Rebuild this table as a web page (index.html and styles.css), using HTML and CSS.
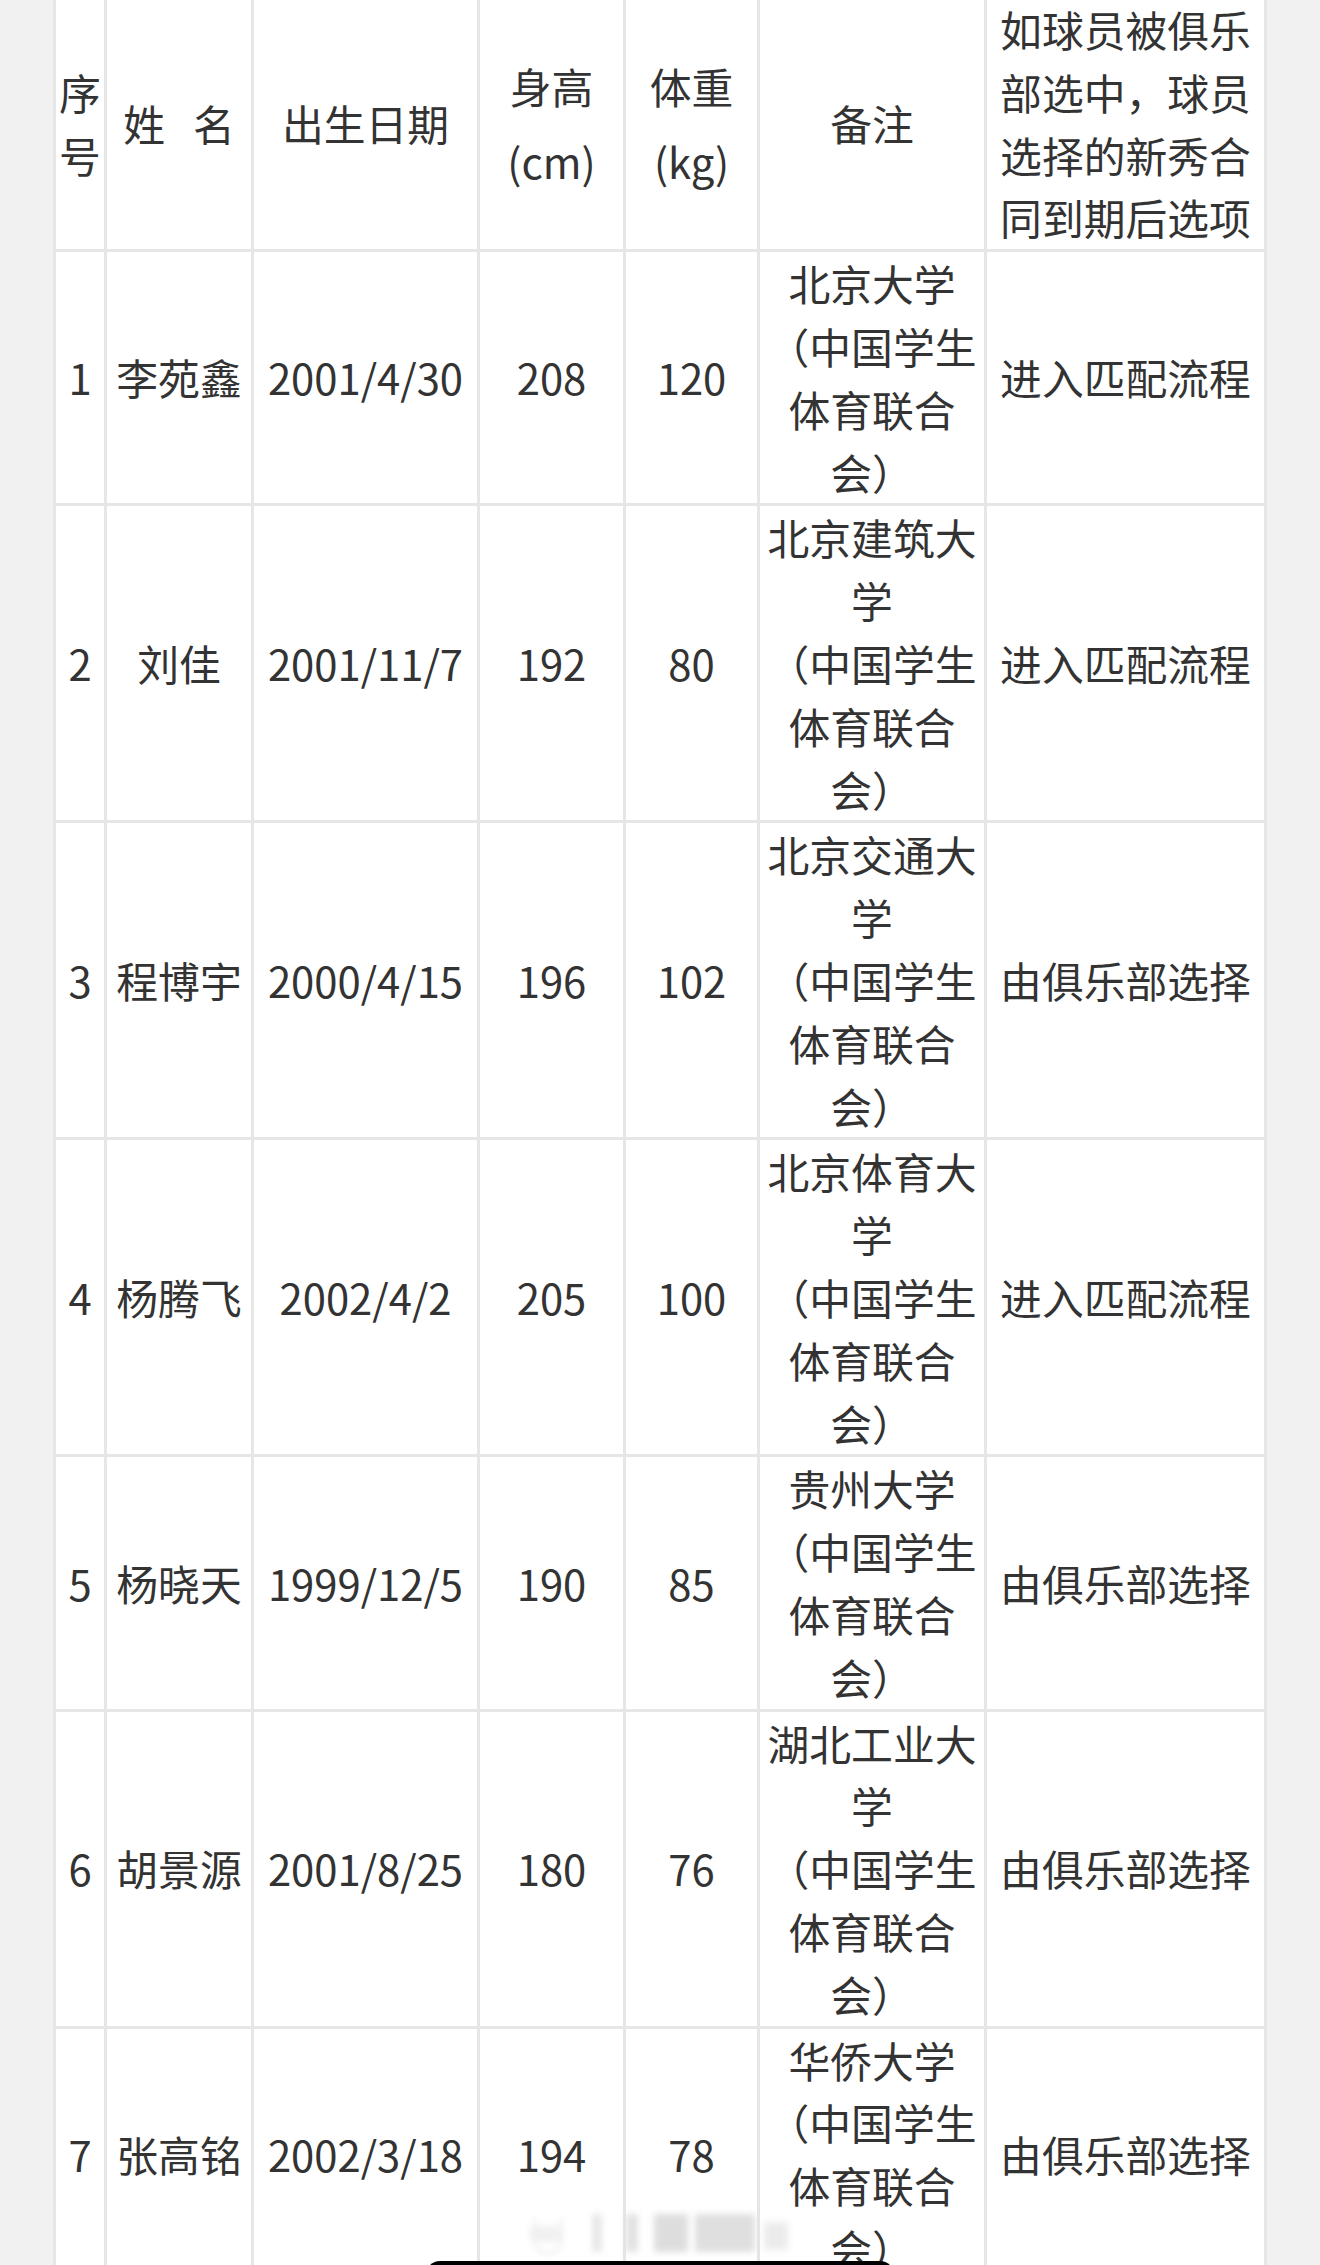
FILE: index.html
```html
<!DOCTYPE html>
<html lang="zh-CN">
<head>
<meta charset="utf-8">
<title>球员名单</title>
<link rel="stylesheet" href="styles.css">
</head>
<body>
<div class="page">
  <table class="roster">
    <colgroup>
      <col class="c-no"><col class="c-name"><col class="c-birth"><col class="c-height"><col class="c-weight"><col class="c-note"><col class="c-option">
    </colgroup>
    <tr class="head">
      <td>序号</td>
      <td>姓<span class="gap"></span>名</td>
      <td>出生日期</td>
      <td><span class="hl">身高</span><span class="hl unit">(cm)</span></td>
      <td><span class="hl">体重</span><span class="hl unit">(kg)</span></td>
      <td>备注</td>
      <td>如球员被俱乐部选中，球员选择的新秀合同到期后选项</td>
    </tr>
    <tr>
      <td>1</td><td>李苑鑫</td><td>2001/4/30</td><td>208</td><td>120</td>
      <td>北京大学<br>（中国学生体育联合会）</td><td>进入匹配流程</td>
    </tr>
    <tr>
      <td>2</td><td>刘佳</td><td>2001/11/7</td><td>192</td><td>80</td>
      <td>北京建筑大学<br>（中国学生体育联合会）</td><td>进入匹配流程</td>
    </tr>
    <tr>
      <td>3</td><td>程博宇</td><td>2000/4/15</td><td>196</td><td>102</td>
      <td>北京交通大学<br>（中国学生体育联合会）</td><td>由俱乐部选择</td>
    </tr>
    <tr>
      <td>4</td><td>杨腾飞</td><td>2002/4/2</td><td>205</td><td>100</td>
      <td>北京体育大学<br>（中国学生体育联合会）</td><td>进入匹配流程</td>
    </tr>
    <tr>
      <td>5</td><td>杨晓天</td><td>1999/12/5</td><td>190</td><td>85</td>
      <td>贵州大学<br>（中国学生体育联合会）</td><td>由俱乐部选择</td>
    </tr>
    <tr>
      <td>6</td><td>胡景源</td><td>2001/8/25</td><td>180</td><td>76</td>
      <td>湖北工业大学<br>（中国学生体育联合会）</td><td>由俱乐部选择</td>
    </tr>
    <tr>
      <td>7</td><td>张高铭</td><td>2002/3/18</td><td>194</td><td>78</td>
      <td>华侨大学<br>（中国学生体育联合会）</td><td>由俱乐部选择</td>
    </tr>
  </table>
</div>

<div class="float-bar" aria-hidden="true">
  <span class="fb-pill"></span>
  <span class="fb b1"></span>
  <span class="fb b2"></span>
  <span class="fb b3"></span>
  <span class="fb b4"></span>
  <span class="fb b5"></span>
  <span class="fb b6"></span>
</div>
<div class="home-bar"></div>
</body>
</html>
```

FILE: styles.css
```css
html, body {
  margin: 0;
  padding: 0;
  height: 2265px;
  overflow: hidden;
  background: #f1f1f1;
}

.page {
  padding: 0 53px;
}

.roster {
  border-collapse: separate;
  border-spacing: 3px;
  background: #e6e6e6;
  width: 1214px;
  table-layout: fixed;
  margin-top: -5px;
  font-family: "Noto Sans CJK SC", "Noto Sans", sans-serif;
  font-size: 41.8px;
  line-height: 62.8px;
  color: #333333;
}

.c-no { width: 48px; }
.c-name { width: 144px; }
.c-birth { width: 223px; }
.c-height { width: 143px; }
.c-weight { width: 131px; }
.c-note { width: 224px; }
.c-option { width: 277px; }

.roster td {
  background: #ffffff;
  padding: 0;
  text-align: center;
  vertical-align: middle;
}

.gap {
  display: inline-block;
  width: 28px;
}

.hl {
  display: block;
}

.hl.unit {
  margin-top: 12px;
}

.float-bar {
  position: absolute;
  left: 530px;
  top: 2208px;
  width: 260px;
  height: 46px;
  filter: blur(3px);
  opacity: 0.85;
}

.fb-pill {
  position: absolute;
  left: 4px;
  top: 10px;
  width: 24px;
  height: 34px;
  border: 2px solid #e4e4e4;
  border-top: none;
  border-radius: 0 0 12px 12px;
}

.fb {
  position: absolute;
  top: 6px;
  height: 38px;
  background: #dedede;
}

.b1 { left: 0; width: 30px; background: #eeeeee; top: 18px; height: 16px; }
.b2 { left: 62px; width: 10px; background: #e4e4e4; }
.b3 { left: 96px; width: 12px; background: #dddddd; }
.b4 { left: 124px; width: 34px; background: #d8d8d8; }
.b5 { left: 165px; width: 60px; background: #dadada; }
.b6 { left: 234px; width: 24px; background: #e8e8e8; top: 14px; height: 28px; }

.home-bar {
  position: absolute;
  left: 426px;
  top: 2261px;
  width: 468px;
  height: 24px;
  background: #000000;
  border-radius: 14px 14px 0 0;
}
```
